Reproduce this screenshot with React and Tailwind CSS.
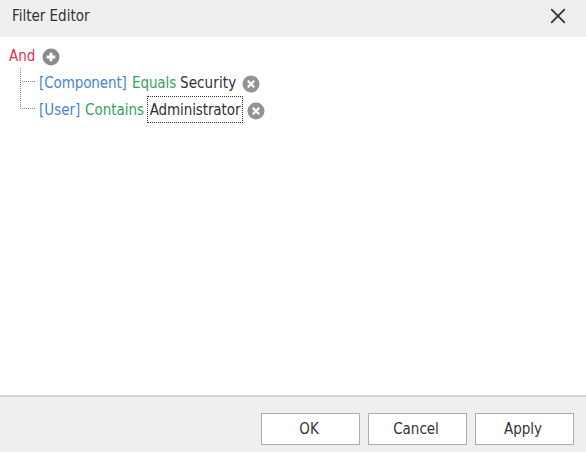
function AddIcon() {
  return (
    <svg className="block h-[18px] w-[18px] shrink-0" viewBox="0 0 18 18">
      <circle cx="9" cy="9" r="8.5" fill="#8b8b8b" />
      <path d="M9 4.7v8.6M4.7 9h8.6" stroke="#fff" strokeWidth="2.8" />
    </svg>
  );
}

function RemoveIcon() {
  return (
    <svg className="mt-px block h-[18px] w-[18px] shrink-0" viewBox="0 0 18 18">
      <circle cx="9" cy="9" r="8.5" fill="#939393" />
      <path d="M5.8 5.8l6.4 6.4M12.2 5.8l-6.4 6.4" stroke="#fff" strokeWidth="2.2" />
    </svg>
  );
}

function TreeLines() {
  return (
    <svg className="block h-[54px] w-[39px] shrink-0" viewBox="0 0 39 54" fill="none" stroke="#858585" strokeDasharray="1 1">
      <path d="M20.5 0v41M22 13.5h13M22 40.5h14" />
    </svg>
  );
}

function Button({ children }) {
  return (
    <button className="flex h-8 w-[99px] items-center justify-center border-[1.5px] border-[#adadad] bg-white pt-px pr-[3px] text-[#34343c]">
      {children}
    </button>
  );
}

export default function App() {
  return (
    <div className="flex h-[452px] w-[586px] flex-col bg-white font-['DejaVu_Sans_Condensed','DejaVu_Sans',sans-serif] text-[15px] [font-stretch:condensed] leading-none tracking-normal whitespace-nowrap text-[#30303a]">
      <header className="flex h-[37px] items-start justify-between bg-[#efefef] pt-[8px] pr-[20px] pl-3">
        <h1 className="pt-px">Filter Editor</h1>
        <svg className="block h-4 w-4" viewBox="0 0 16 16">
          <path d="M1.2 1.2l13.6 13.6M14.8 1.2L1.2 14.8" stroke="#303030" strokeWidth="1.7" />
        </svg>
      </header>
      <main className="flex-1 pt-[11px]">
        <div className="flex h-[20px] items-start pl-[9px]">
          <span className="w-[33px] pt-px text-[#dc3554]">And</span>
          <AddIcon />
        </div>
        <div className="flex">
          <TreeLines />
          <div className="flex flex-col">
            <div className="flex h-[27px] items-center pt-[3px]">
              <span className="w-[93px] tracking-[-0.1px] text-[#4586cf]">[Component]</span>
              <span className="w-[48px] tracking-[-0.1px] text-[#35a15e]">Equals</span>
              <span className="w-[62px] tracking-[0.1px]">Security</span>
              <RemoveIcon />
            </div>
            <div className="flex h-[27px] items-center pt-[3px]">
              <span className="w-[46px] text-[#4586cf]">[User]</span>
              <span className="w-[62px] text-[#35a15e]">Contains</span>
              <span className="-mt-[2px] mr-[4px] flex h-[27px] w-[96px] items-center justify-center border border-dotted border-[#303030] pt-[2px] tracking-[-0.1px]">Administrator</span>
              <RemoveIcon />
            </div>
          </div>
        </div>
      </main>
      <footer className="flex h-[57px] items-start justify-end gap-2 border-t-2 border-[#d2d2d2] bg-[#efefef] pt-4 pr-3">
        <Button>OK</Button>
        <Button>Cancel</Button>
        <Button>Apply</Button>
      </footer>
    </div>
  );
}
